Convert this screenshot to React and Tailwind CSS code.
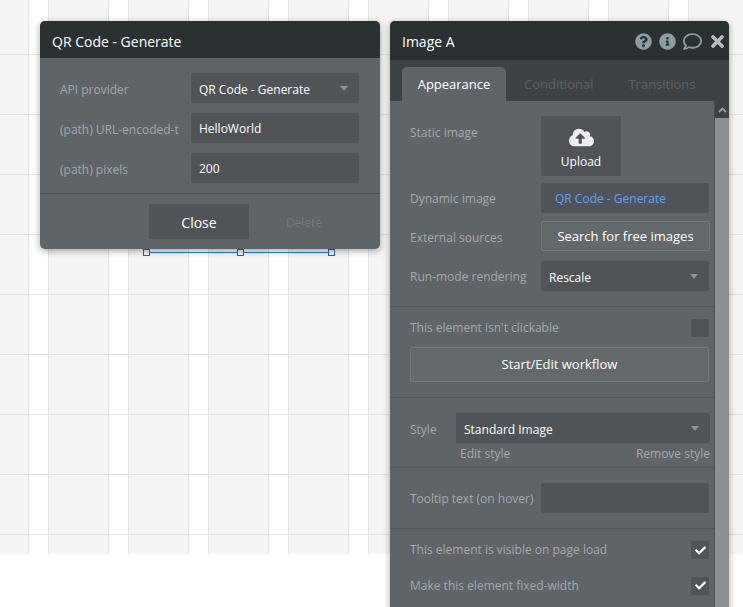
import {
  FaCheck,
  FaCloudUploadAlt,
  FaInfoCircle,
  FaQuestionCircle,
  FaRegComment,
  FaTimes,
} from "react-icons/fa";

const caret = (
  <span className="w-0 h-0 border-x-[4px] border-x-transparent border-t-[5px] border-t-[#8f9497]" />
);

function Select({ text, className }) {
  return (
    <div
      className={`flex items-center justify-between h-[30px] pl-2 pr-[11px] bg-[#505458] text-white rounded-[2px] ${className}`}
    >
      <span className="pt-[3px]">{text}</span>
      {caret}
    </div>
  );
}

function Input({ text, className }) {
  return (
    <div
      className={`flex items-center h-[30px] px-2 bg-[#505458] text-white rounded-[2px] ${className}`}
    >
      <span className="pt-[1px]">{text}</span>
    </div>
  );
}

function Handle({ className }) {
  return (
    <span
      className={`absolute top-[249px] w-[7px] h-[7px] border border-[#1565d8] bg-[#f5f5f5] ${className}`}
    />
  );
}

function Checkbox({ checked }) {
  return (
    <span className="flex items-center justify-center w-[18px] h-[18px] bg-[#505458] text-white text-[11px] rounded-[1px]">
      {checked && <FaCheck />}
    </span>
  );
}

function LeftPanel() {
  return (
    <div className="absolute left-[40px] top-[21px] w-[340px] h-[228px] rounded-[5px] overflow-hidden bg-[#5f6468] shadow-[0_2px_7px_rgba(0,0,0,0.35)]">
      <div className="flex items-center h-[37px] px-3 pt-[4px] bg-[#2b3133] text-white text-[14px]">
        QR Code - Generate
      </div>
      <div className="flex flex-col gap-[10px] pt-[15px] pr-[21px] pl-5 h-[136px] border-b border-[#4a4e51] text-[12px]">
        <div className="flex items-center justify-between">
          <span className="pt-[3px] text-[#a5aaad]">API provider</span>
          <Select text="QR Code - Generate" className="w-[168px]" />
        </div>
        <div className="flex items-center justify-between">
          <span className="pt-[3px] text-[#a5aaad]">(path) URL-encoded-t</span>
          <Input text="HelloWorld" className="w-[168px]" />
        </div>
        <div className="flex items-center justify-between">
          <span className="pt-[3px] text-[#a5aaad]">(path) pixels</span>
          <Input text="200" className="w-[168px]" />
        </div>
      </div>
      <div className="flex items-center pl-[109px] pt-[10px]">
        <button className="w-[100px] h-[35px] pt-[2px] bg-[#505458] text-white text-[14px] rounded-[1px]">
          Close
        </button>
        <span className="w-[110px] pt-[2px] text-center text-[12px] text-[#757a7d]">
          Delete
        </span>
      </div>
    </div>
  );
}

function Divider({ className }) {
  return <div className={`h-px bg-[#54585c] -ml-5 -mr-[5px] ${className}`} />;
}

function RightPanel() {
  return (
    <div className="absolute left-[390px] top-[21px] w-[339px] h-[600px] rounded-t-[5px] overflow-hidden flex flex-col bg-[#5f6468] shadow-[0_2px_7px_rgba(0,0,0,0.35)] text-[12px] leading-[18px]">
      <div className="flex items-center justify-between h-[39px] shrink-0 pl-3 pr-[2px] bg-[#2b3133] text-white text-[14px]">
        <span className="pt-[2px]">Image A</span>
        <div className="flex items-center pt-[2px] text-[#8d9da5]">
          <FaQuestionCircle className="text-[17px]" />
          <FaInfoCircle className="text-[17px] ml-[7px]" />
          <FaRegComment className="text-[19px] ml-[7px]" />
          <FaTimes className="text-[19px] ml-[6px] text-[#b5bcc0]" />
        </div>
      </div>
      <div className="flex items-end h-[41px] shrink-0 pl-3 bg-[#3d4245] text-[#5c6165] text-[13px]">
        <div className="flex items-center justify-center w-[104px] h-[34px] rounded-t-[5px] bg-[#5f6468] text-white">
          Appearance
        </div>
        <div className="flex items-center h-[34px] ml-[18px]">Conditional</div>
        <div className="flex items-center h-[34px] ml-[35px]">Transitions</div>
      </div>
      <div className="flex flex-1 min-h-0">
        <div className="flex-1 min-w-0 flex flex-col pl-5 pr-[5px] pt-[15px] text-[#a5aaad]">
          <div className="flex justify-between">
            <span className="mt-[8px]">Static image</span>
            <div className="flex flex-col items-center justify-center gap-[5px] w-[80px] h-[60px] mr-[88px] bg-[#505458] text-white rounded-[2px]">
              <FaCloudUploadAlt className="text-[25px] text-[#eceeef]" />
              <span className="leading-none pt-[1px]">Upload</span>
            </div>
          </div>
          <div className="flex items-center justify-between mt-[7px]">
            <span className="pt-[2px]">Dynamic image</span>
            <Input
              text="QR Code - Generate"
              className="w-[168px] !text-[#5ba3ef] !pl-[14px]"
            />
          </div>
          <div className="flex items-center justify-between mt-2">
            <span className="pt-[3px]">External sources</span>
            <button className="w-[169px] h-[30px] -mr-px bg-[#63686b] border border-[#75797c] rounded-[2px] text-white text-[13px]">
              Search for free images
            </button>
          </div>
          <div className="flex items-center justify-between mt-[10px]">
            <span className="pt-[1px]">Run-mode rendering</span>
            <Select text="Rescale" className="w-[168px]" />
          </div>
          <Divider className="mt-[15px]" />
          <div className="flex items-center justify-between mt-3">
            <span>This element isn't clickable</span>
            <Checkbox />
          </div>
          <button className="h-[35px] mt-[10px] pb-[2px] bg-[#63686b] border border-[#75797c] rounded-[2px] text-white text-[13px]">
            Start/Edit workflow
          </button>
          <Divider className="mt-[15px]" />
          <div className="flex items-center justify-between mt-[15px]">
            <span className="pt-[3px]">Style</span>
            <Select text="Standard Image" className="w-[254px] -mr-px" />
          </div>
          <div className="flex justify-between pl-[50px] -mr-px mt-[2px]">
            <span>Edit style</span>
            <span>Remove style</span>
          </div>
          <Divider className="mt-[4px]" />
          <div className="flex items-center justify-between mt-[15px]">
            <span className="pt-[2px]">Tooltip text (on hover)</span>
            <Input className="w-[168px]" />
          </div>
          <Divider className="mt-[15px]" />
          <div className="flex items-center justify-between mt-3">
            <span>This element is visible on page load</span>
            <Checkbox checked />
          </div>
          <div className="flex items-center justify-between mt-[17px]">
            <span className="pt-[1px]">Make this element fixed-width</span>
            <Checkbox checked />
          </div>
        </div>
        <div className="w-[15px] shrink-0 bg-[#8d9092] border-l border-[#4a4e51]">
          <div className="flex items-center justify-center h-[17px] bg-[#3d4245] text-[#9ca1a4]">
            <svg width="9" height="6" viewBox="0 0 9 6">
              <path d="M1 5 L4.5 1.5 L8 5" fill="none" stroke="currentColor" strokeWidth="1.8" />
            </svg>
          </div>
        </div>
      </div>
    </div>
  );
}

export default function App() {
  return (
    <div className="relative h-screen overflow-hidden bg-white font-['Open_Sans',sans-serif]">
      <div className="h-[554px] bg-[#f5f5f5] bg-[linear-gradient(to_bottom,transparent_54px,#e3e3e3_54px,#e3e3e3_55px,transparent_55px),linear-gradient(to_right,#e3e3e3_1px,#ffffff_1px,#ffffff_20px,#e3e3e3_20px,#e3e3e3_21px,transparent_21px)] bg-[length:100%_60px,80px_100%] bg-[position:0_0,28px_0]" />
      <div className="absolute left-[150px] top-[252px] w-[178px] h-px bg-[#1a80e6]" />
      <Handle className="left-[143px]" />
      <Handle className="left-[237px]" />
      <Handle className="left-[328px]" />
      <LeftPanel />
      <RightPanel />
    </div>
  );
}
